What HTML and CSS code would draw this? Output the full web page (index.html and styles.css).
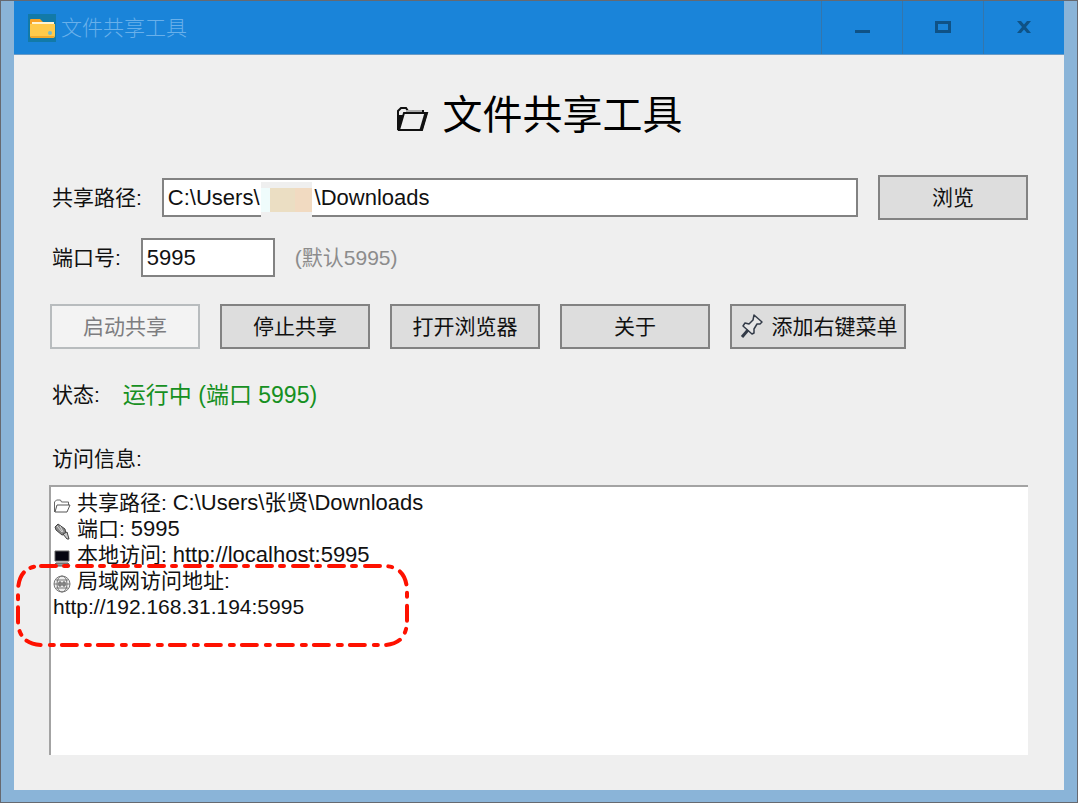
FILE: index.html
```html
<!DOCTYPE html>
<html lang="zh-CN">
  <head>
    <meta charset="UTF-8" />
    <meta name="viewport" content="width=device-width, initial-scale=1.0" />
    <title>文件共享工具</title>
    <link rel="stylesheet" href="styles.css">
  </head>
  <body>
    <div class="window">
      <header class="titlebar">
        <svg class="app-icon" viewBox="0 0 28 28" aria-hidden="true">
          <rect width="28" height="28" fill="#127aa8" />
          <path d="M2 6q0-1 1-1h9l3 3h10q1 0 1 1v14H2z" fill="#f8a225" />
          <path d="M4 8h22v4H4z" fill="#fff3d0" />
          <path d="M2 10h25v11q0 3-2 3H4q-2 0-2-3z" fill="#ffca4b" />
          <path d="M2 22h24v2H3z" fill="#f1a92c" />
          <circle cx="22" cy="19" r="2" fill="#78bcc8" />
        </svg>
        <span class="titlebar-text">文件共享工具</span>
        <div class="window-controls">
          <button type="button" aria-label="最小化">
            <svg width="16" height="12" viewBox="0 0 16 12"><path d="M1 9h15v3H1z" fill="#0f5286" /></svg>
          </button>
          <button type="button" aria-label="最大化">
            <svg width="16" height="12" viewBox="0 0 16 12"><path d="M1.5 1.5h13v9h-13z" fill="none" stroke="#0f5286" stroke-width="3" /></svg>
          </button>
          <button type="button" aria-label="关闭">
            <svg width="14" height="12" viewBox="0 0 14 12"><path d="M0 0h4l3 3.5L10 0h4L9 6l5 6h-4L7 8.500 4 12H0l5-6z" fill="#0f5286" /></svg>
          </button>
        </div>
      </header>

      <main class="content">
        <h1>
          <svg class="title-icon" viewBox="0 0 33 26" aria-hidden="true">
            <path d="M2 24V5l3-3h5l2 3h15v4" fill="#efefef" stroke="#111" stroke-width="2" />
            <path d="M2 9h5L6 24H2z" fill="#111" />
            <path d="M10 4h16v3H10z" fill="#aaa" />
            <path d="M8 7h23l-5 17H3z" fill="#efefef" stroke="#111" stroke-width="2" />
            <path d="M30 7l-5 17" stroke="#111" stroke-width="3" />
          </svg>
          文件共享工具
        </h1>

        <div class="row path-row">
          <label for="path">共享路径:</label>
          <div class="path-box">
            <input type="text" id="path" value="C:\Users\         \Downloads" />
            <span class="mask"></span>
          </div>
          <button type="button" class="btn">浏览</button>
        </div>

        <div class="row port-row">
          <label for="port">端口号:</label>
          <input type="text" id="port" value="5995" />
          <span class="hint">(默认5995)</span>
        </div>

        <div class="actions">
          <button type="button" class="btn" disabled>启动共享</button>
          <button type="button" class="btn">停止共享</button>
          <button type="button" class="btn">打开浏览器</button>
          <button type="button" class="btn">关于</button>
          <button type="button" class="btn btn-menu">
            <svg width="26" height="26" viewBox="0 0 26 26" aria-hidden="true">
              <path d="M15 3l8 7-2 2-3 0-3 5 0 4-2 1-9-8 2-3 4 1 4-4z" fill="#e6e6e6" stroke="#333b48" stroke-width="1.500" stroke-linejoin="round" />
              <path d="M9 18l-6 7" stroke="#333b48" stroke-width="3" />
            </svg>
            添加右键菜单
          </button>
        </div>

        <div class="status">
          <span>状态:</span>
          <span class="status-value">运行中 (端口 5995)</span>
        </div>

        <h2>访问信息:</h2>
        <div class="info">
          <ul>
            <li>
              <svg viewBox="0 0 18 18" aria-hidden="true">
                <path d="M1.500 15V5l2-2h4l1 2h7v3" fill="none" stroke="#666" />
                <path d="M4 8h13l-3 7H2z" fill="#fff" stroke="#555" />
              </svg>
              <span>共享路径: <span class="value">C:\Users\张贤\Downloads</span></span>
            </li>
            <li>
              <svg viewBox="0 0 18 18" aria-hidden="true">
                <path d="M2 4l3-3 7 5 1 5-4 1-6-5z" fill="#888" stroke="#444" />
                <path d="M4 3l5 6M7 3l3 6" stroke="#ddd" />
                <path d="M10 11l4-2 2 7-2 0z" fill="#ccc" stroke="#444" />
              </svg>
              <span>端口: <span class="value">5995</span></span>
            </li>
            <li>
              <svg viewBox="0 0 18 18" aria-hidden="true">
                <path d="M2 2h14v10H2z" fill="#050510" stroke="#666" />
                <path d="M3 14h12l2 3H1z" fill="#999" stroke="#555" />
              </svg>
              <span>本地访问: <span class="value">http://localhost:5995</span></span>
            </li>
            <li>
              <svg viewBox="0 0 18 18" aria-hidden="true" fill="none" stroke="#777">
                <circle cx="9" cy="9" r="8" fill="#eee" />
                <ellipse cx="9" cy="9" rx="5" ry="8" />
                <path d="M1 9h16M3 5h12M3 13h12" />
                <path d="M6 7h2v4H6zM10 7h2v4h-2z" stroke="#555" />
              </svg>
              <span>局域网访问地址:</span>
            </li>
            <li>http://192.168.31.194:5995</li>
          </ul>
          <svg class="highlight" width="394" height="84" viewBox="0 0 394 84" aria-hidden="true">
            <path d="M25 2H367Q391 2 391 28V56Q391 81 367 81H27Q2 81 2 56V28Q2 2 25 2" />
          </svg>
        </div>
      </main>
    </div>
  </body>
</html>
```

FILE: styles.css
```css
* {
  margin: 0;
  padding: 0;
  box-sizing: border-box;
}

body,
input,
button {
  font-family: "Liberation Sans", "Noto Sans CJK SC", sans-serif;
  font-size: 21px;
  color: #111;
}

.window {
  display: flex;
  flex-direction: column;
  min-height: 100vh;
  padding: 0 13px 12px;
  border: 1px solid #666970;
  background-color: #8ab4d8;
}

.titlebar {
  display: flex;
  align-items: center;
  height: 54px;
  padding-left: 14px;
  background-color: #1a84d9;
  border-bottom: 1px solid #6a9bc6;
}

.app-icon {
  width: 28px;
  height: 28px;
}

.titlebar-text {
  margin-left: 5px;
  padding-bottom: 4px;
  color: #69b0ea;
  font-weight: 300;
}

.window-controls {
  display: flex;
  align-self: stretch;
  margin-left: auto;
}

.window-controls button {
  display: flex;
  align-items: center;
  justify-content: center;
  width: 81px;
  padding-bottom: 2px;
  border: 0;
  border-left: 1px solid #3476ac;
  background-color: transparent;
}

.content {
  display: flex;
  flex: 1;
  flex-direction: column;
  padding: 40px 36px 35px;
  background-color: #efefef;
}

h1 {
  display: flex;
  align-items: center;
  justify-content: center;
  gap: 14px;
  margin-bottom: 40px;
  font-size: 40px;
  font-weight: 400;
  line-height: 40px;
  color: #000;
}

.title-icon {
  width: 33px;
  height: 26px;
  margin-top: 8px;
}

.row {
  display: flex;
  align-items: center;
  gap: 20px;
  padding-left: 2px;
}

.path-row {
  margin-bottom: 18px;
}

.port-row {
  margin-bottom: 27px;
}

.row label,
.hint {
  padding-bottom: 4px;
}

input {
  height: 39px;
  padding: 0 4px;
  border: 2px solid #828282;
  background-color: #fff;
  font-size: 22px;
}

.path-box {
  position: relative;
  flex: 1;
}

.path-box input {
  display: block;
  width: 100%;
}

/* covers the user name in the path */
.mask {
  position: absolute;
  top: 4px;
  left: 99px;
  width: 51px;
  height: 35px;
  border: solid #efefef;
  border-width: 6px 0 5px;
  background: linear-gradient(90deg, #effcfc 9px, #ebdec3 9px, #ebdec3 34px, #f1dac1 34px);
}

#port {
  width: 134px;
}

.hint {
  color: #8c8c8c;
}

.btn {
  width: 150px;
  height: 45px;
  padding-bottom: 3px;
  border: 2px solid #828282;
  background-color: #dddddd;
}

.btn:hover {
  background-color: #e5f1fb;
}

.btn:disabled {
  border-color: #b8bcbe;
  background-color: #f3f3f3;
  color: #7d7d80;
}

.actions {
  display: flex;
  gap: 20px;
  margin-bottom: 31px;
}

.btn-menu {
  display: flex;
  align-items: center;
  justify-content: center;
  gap: 7px;
  width: 176px;
  white-space: nowrap;
}

.status {
  display: flex;
  align-items: center;
  gap: 23px;
  margin-bottom: 34px;
  padding-left: 2px;
  line-height: 30px;
}

.status-value {
  color: #169022;
  font-size: 23px;
}

h2 {
  margin-bottom: 11px;
  padding-left: 2px;
  font-size: 21px;
  font-weight: 400;
  line-height: 30px;
}

.info {
  position: relative;
  flex: 1;
  margin-left: -1px;
  padding: 3px 2px;
  border-top: 2px solid #a3a3a3;
  border-left: 2px solid #a3a3a3;
  background-color: #fff;
}

.info ul {
  list-style: none;
}

.info li {
  display: flex;
  align-items: center;
  gap: 6px;
  height: 26px;
  line-height: 26px;
}

.info li svg {
  width: 18px;
  height: 18px;
  margin-top: 6px;
}

.value {
  font-size: 22px;
}

.highlight {
  position: absolute;
  top: 77px;
  left: -35px;
}

.highlight path {
  fill: none;
  stroke: #fe1100;
  stroke-width: 4;
  stroke-linecap: round;
  stroke-dasharray: 15 8 4 9;
}
```
